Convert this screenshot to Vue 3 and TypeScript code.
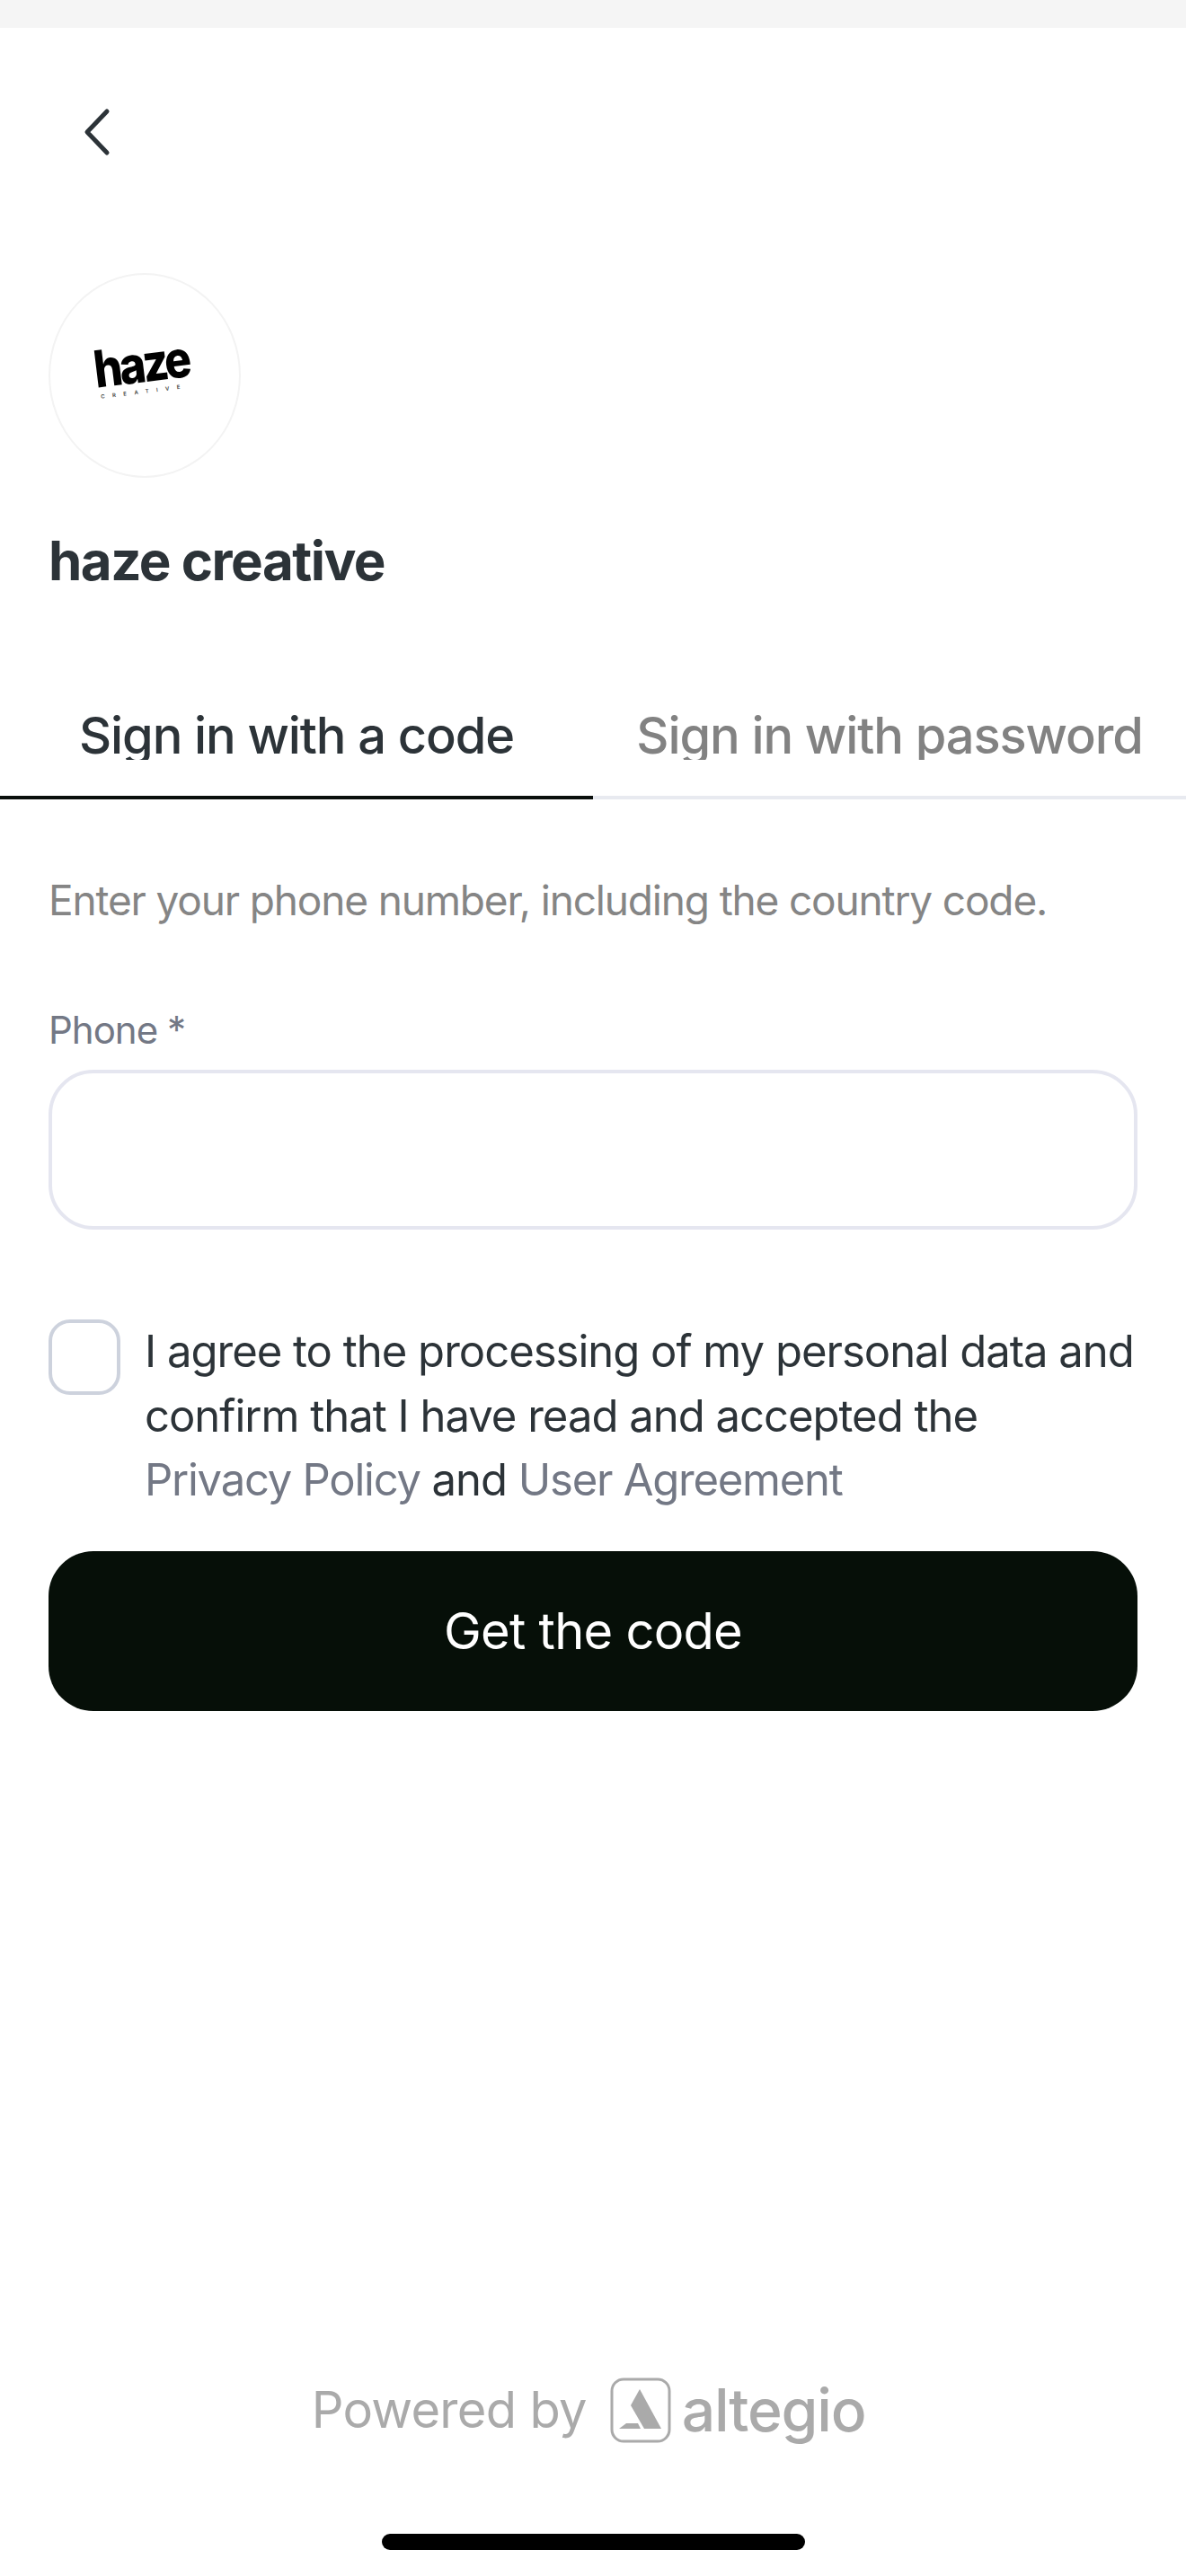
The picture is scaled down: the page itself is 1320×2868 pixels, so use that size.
<script setup lang="ts">
import { ref } from 'vue'

const activeTab = ref<'code' | 'password'>('code')
const phone = ref('')
const agreed = ref(false)
</script>

<template>
  <div class="page">
    <div class="status-strip"></div>

    <button class="back" type="button" aria-label="Back">
      <svg width="30" height="54" viewBox="0 0 30 54" fill="none">
        <path d="M26 4 4 27l22 23" stroke="#2c3338" stroke-width="5" stroke-linecap="round" stroke-linejoin="round" />
      </svg>
    </button>

    <header class="brand">
      <div class="brand__logo">
        <div class="brand__mark">
          <span class="brand__haze">haze</span>
          <span class="brand__sub">CREATIVE</span>
        </div>
      </div>
      <h1>haze creative</h1>
    </header>

    <nav class="tabs">
      <button class="tab" :class="{ 'tab--active': activeTab === 'code' }" type="button" @click="activeTab = 'code'">
        <span>Sign in with a code</span>
      </button>
      <button class="tab" :class="{ 'tab--active': activeTab === 'password' }" type="button" @click="activeTab = 'password'">
        <span>Sign in with password</span>
      </button>
    </nav>

    <form class="form" @submit.prevent>
      <p class="form__hint">Enter your phone number, including the country code.</p>

      <label class="field">
        <span>Phone *</span>
        <input v-model="phone" type="tel" />
      </label>

      <div class="consent">
        <input v-model="agreed" class="consent__box" type="checkbox" />
        <p>
          I agree to the processing of my personal data and confirm that I have read and accepted the<br />
          <a href="#">Privacy Policy</a> and <a href="#">User Agreement</a>
        </p>
      </div>

      <button class="submit" type="submit">Get the code</button>
    </form>

    <footer class="footer">
      <div class="powered">
        <span class="powered__label">Powered by</span>
        <svg class="powered__icon" width="68" height="73" viewBox="0 0 68 73" fill="none">
          <rect x="2" y="2" width="64" height="69" rx="13" stroke="#aaa" stroke-width="3" />
          <path d="M33 13 57 57H38L23 31Z" fill="#aaa" />
          <path d="M10 57 18 51H31L34 57Z" fill="#aaa" />
        </svg>
        <span class="powered__name">altegio</span>
      </div>
      <div class="home-bar"></div>
    </footer>
  </div>
</template>

<style>
html,
body {
  margin: 0;
  background: #fff;
}
</style>

<style scoped>
.page {
  display: flex;
  flex-direction: column;
  height: 2868px;
  background: #fff;
  color: #2c3338;
  font-family: Inter, 'Liberation Sans', sans-serif;
  overflow: hidden;
}

.status-strip {
  flex: none;
  height: 31px;
  background: #f5f5f5;
}

.back {
  align-self: flex-start;
  display: flex;
  margin: 89px 0 0 93px;
  padding: 0;
  border: 0;
  background: none;
}

.brand {
  margin: 130px 0 0 54px;
}

.brand__logo {
  display: flex;
  align-items: center;
  justify-content: center;
  box-sizing: border-box;
  width: 214px;
  height: 228px;
  border: 2px solid #f3f3f3;
  border-radius: 50%;
}

.brand__mark {
  display: flex;
  flex-direction: column;
  align-items: center;
  margin: -14px 0 0 -7px;
  transform: rotate(-7deg);
}

.brand__haze {
  color: #000;
  font-size: 50px;
  font-weight: 800;
  line-height: 44px;
  letter-spacing: -3.5px;
  transform: scaleY(1.14);
}

.brand__sub {
  margin-top: 5px;
  color: #444;
  font-size: 6px;
  font-weight: 600;
  line-height: 8px;
  letter-spacing: 8.5px;
}

.brand h1 {
  margin: 54px 0 0;
  font-size: 60px;
  font-weight: 700;
  line-height: 76px;
  letter-spacing: -1.5px;
}

.tabs {
  display: grid;
  grid-template-columns: 1fr 1fr;
  margin-top: 106px;
}

.tab {
  display: flex;
  justify-content: center;
  height: 122px;
  padding: 24px 0 0;
  border: 0;
  border-bottom: 4px solid #e8eaf0;
  background: none;
  color: #828282;
  font: inherit;
  font-size: 56px;
  font-weight: 450;
  line-height: 54px;
  letter-spacing: -1.1px;
  white-space: nowrap;
}

.tab span {
  height: 54px;
  overflow: hidden;
}

.tab--active {
  border-bottom-color: #0a0f0c;
  color: #2c3338;
}

.form {
  display: flex;
  flex-direction: column;
  padding: 0 54px;
}

.form__hint {
  margin: 80px 0 0;
  color: #858585;
  font-size: 46px;
  line-height: 64px;
  letter-spacing: -1.16px;
}

.field {
  display: flex;
  flex-direction: column;
  gap: 16px;
  margin-top: 85px;
  color: #737885;
  font-size: 42px;
  line-height: 56px;
  letter-spacing: -1px;
}

.field input {
  box-sizing: border-box;
  height: 178px;
  padding: 0 40px;
  border: 4px solid #e5e6f0;
  border-radius: 50px;
  outline: none;
  font: inherit;
}

.consent {
  display: flex;
  gap: 27px;
  margin-top: 100px;
}

.consent__box {
  flex: none;
  box-sizing: border-box;
  width: 80px;
  height: 84px;
  margin: 0;
  border: 4px solid #cdd2dd;
  border-radius: 24px;
  appearance: none;
}

.consent p {
  margin: 0;
  font-size: 49px;
  line-height: 71.5px;
  letter-spacing: -1px;
}

.consent a {
  color: #737885;
  text-decoration: none;
  letter-spacing: -1.25px;
}

.submit {
  height: 178px;
  margin-top: 43px;
  border: 0;
  border-radius: 50px;
  background: #060f08;
  color: #fff;
  font: inherit;
  font-size: 56px;
  letter-spacing: -0.75px;
}

.footer {
  display: flex;
  flex-direction: column;
  align-items: center;
  margin-top: auto;
  padding-bottom: 29px;
}

.powered {
  display: flex;
  align-items: center;
  margin-right: 10px;
}

.powered__label {
  color: #aaa;
  font-size: 56px;
  letter-spacing: -0.7px;
}

.powered__icon {
  margin: 0 12px 0 26px;
}

.powered__name {
  color: #aaa;
  font-size: 66px;
  font-weight: 500;
  letter-spacing: -1.2px;
}

.home-bar {
  width: 471px;
  height: 18px;
  margin-top: 98px;
  border-radius: 9px;
  background: #000;
}
</style>
